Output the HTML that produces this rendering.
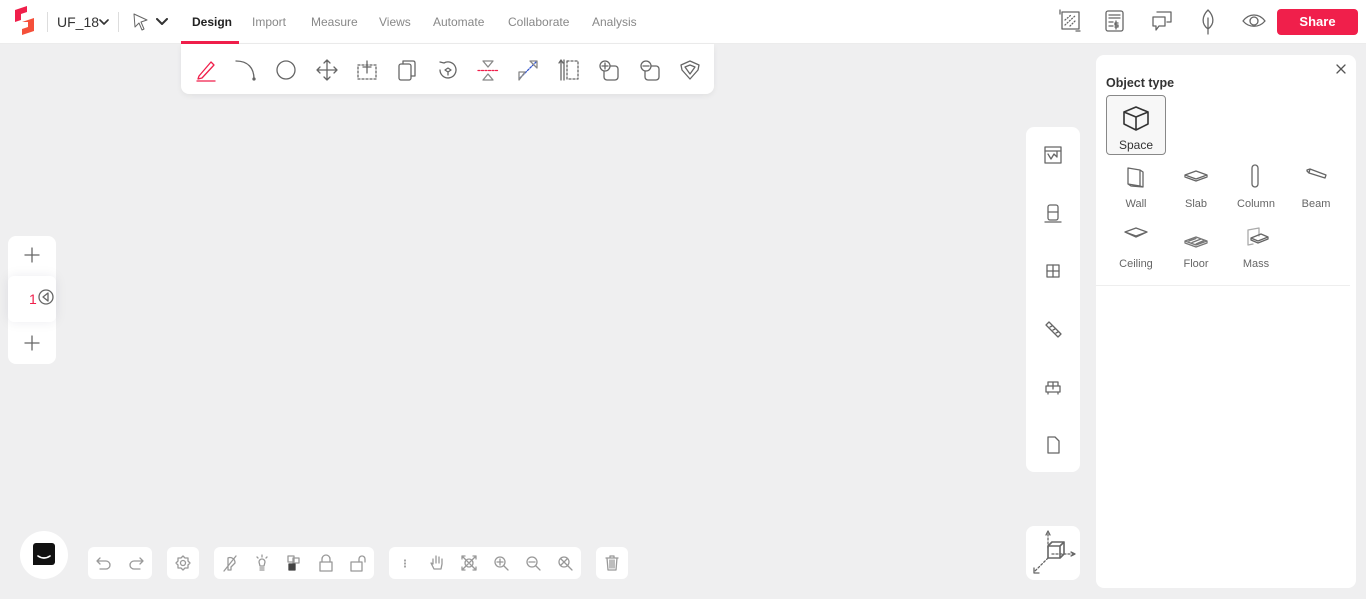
<!DOCTYPE html>
<html><head><meta charset="utf-8"><style>
*{box-sizing:border-box;margin:0;padding:0}
body{width:1366px;height:599px;overflow:hidden;background:#efeff0;font-family:"Liberation Sans",sans-serif;position:relative}
.a{position:absolute}
.top{left:0;top:0;width:1366px;height:44px;background:#fff;border-bottom:1px solid #ececec}
.nav{top:15px;font-size:12px;color:#888}
.card{background:#fff;border-radius:6px}
svg{position:absolute;fill:none;stroke:#666;stroke-width:1.3;stroke-linecap:round;stroke-linejoin:round}
.lbl{font-size:11px;color:#666;text-align:center;width:60px}
</style></head><body>
<div class="a top"></div>
<svg style="left:12px;top:6px" width="26" height="30" viewBox="0 0 26 30"><path d="M3 4 L15 0 L15 6 L9 8 L9 14 L3 16Z" fill="#f01f4b" stroke="none"/><path d="M10 16 L22 12 L22 25 L10 29 L10 23 L16 21 L16 16Z" fill="#f5503a" stroke="none"/></svg>
<div class="a" style="left:47px;top:12px;width:1px;height:20px;background:#ddd"></div>
<div class="a" style="left:57px;top:14px;font-size:14px;color:#333">UF_18</div>
<svg style="left:99px;top:18px" width="10" height="8"><path d="M1 2 L5 6 L9 2" stroke="#333" stroke-width="1.6"/></svg>
<div class="a" style="left:118px;top:12px;width:1px;height:20px;background:#ddd"></div>
<svg style="left:132px;top:12px" width="18" height="20"><path d="M2 2 L15 8 L9 10 L12 17 L10 18 L7 11 L3 15Z" stroke-width="1"/></svg>
<svg style="left:156px;top:18px" width="12" height="8"><path d="M1 1 L6 6 L11 1" stroke="#333" stroke-width="2"/></svg>
<div class="a nav" style="left:192px;color:#222;font-weight:bold">Design</div>
<div class="a" style="left:181px;top:41px;width:58px;height:3px;background:#f01f4b"></div>
<div class="a nav" style="left:252px">Import</div>
<div class="a nav" style="left:311px">Measure</div>
<div class="a nav" style="left:379px">Views</div>
<div class="a nav" style="left:433px">Automate</div>
<div class="a nav" style="left:508px">Collaborate</div>
<div class="a nav" style="left:592px">Analysis</div>
<svg style="left:1059px;top:9px" width="24" height="24"><rect x="3" y="3" width="17" height="17"/><path d="M6 16 L17 6 M6 11 L12 6 M11 17 L17 11" stroke-dasharray="1 2"/><path d="M1 1 V5 M21 22 H17"/></svg>
<svg style="left:1104px;top:9px" width="22" height="24"><rect x="2" y="2" width="17" height="20" rx="2"/><path d="M5 6H16 M5 9H16 M5 13H9 M5 17H9 M12 12 V20 M14 14 H11 V16 H14 V18 H11"/></svg>
<svg style="left:1150px;top:9px" width="24" height="24"><path d="M7 3 H21 V13 H17 M3 8 H15 V17 H9 L6 21 V17 H3Z"/></svg>
<svg style="left:1198px;top:8px" width="20" height="28"><path d="M10 2 C16 8 17 16 10 21 C3 16 4 8 10 2Z M10 10 V26"/></svg>
<svg style="left:1241px;top:13px" width="26" height="16"><path d="M2 8 C8 0 18 0 24 8 C18 15 8 15 2 8Z"/><circle cx="13" cy="8" r="4"/></svg>
<div class="a" style="left:1277px;top:9px;width:81px;height:26px;background:#f01f4b;border-radius:4px;color:#fff;font-weight:bold;font-size:13px;text-align:center;line-height:26px">Share</div>
<div class="a card" style="left:181px;top:44px;width:533px;height:50px;border-radius:0 0 8px 8px;box-shadow:0 2px 6px rgba(0,0,0,.06)"></div>
<svg style="left:195px;top:58px" width="24" height="24"><path d="M4 18 L16 4 L19 7 L7 20 L3 21Z" stroke="#f01f4b"/><path d="M2 23 H20" stroke="#f01f4b"/></svg>
<svg style="left:234px;top:58px" width="24" height="24"><path d="M2 3 C14 3 20 10 20 21"/><circle cx="20" cy="21" r="1" fill="#666"/></svg>
<svg style="left:275px;top:59px" width="22" height="22"><circle cx="11" cy="11" r="9"/></svg>
<svg style="left:315px;top:58px" width="24" height="24"><path d="M12 2V22 M2 12H22 M9 5 L12 2 L15 5 M9 19 L12 22 L15 19 M5 9 L2 12 L5 15 M19 9 L22 12 L19 15"/></svg>
<svg style="left:355px;top:58px" width="24" height="24"><rect x="3" y="7" width="18" height="14" stroke-dasharray="2 2"/><path d="M12 3V15 M8 9H16"/></svg>
<svg style="left:396px;top:58px" width="22" height="24"><rect x="3" y="6" width="12" height="16" rx="2"/><path d="M7 6 V3 H17 Q19 3 19 5 V18 H15"/></svg>
<svg style="left:436px;top:58px" width="24" height="24"><path d="M4 12 A8 8 0 1 0 8 5 M8 5 L4 4"/><path d="M9 12 L12 10 L15 12 L12 14Z M12 14V17"/></svg>
<svg style="left:476px;top:58px" width="24" height="24"><path d="M7 3 H17 L12 9Z M7 22 H17 L12 16Z" stroke="#888"/><path d="M2 12.5 H22" stroke="#f01f4b" stroke-dasharray="2 1.5"/></svg>
<svg style="left:516px;top:58px" width="24" height="24"><path d="M4 20 L20 4" stroke="#3355cc" stroke-dasharray="2 1.5"/><path d="M3 14 L3 22 L9 14Z M14 3 L21 3 L21 10Z" stroke="#888"/></svg>
<svg style="left:557px;top:58px" width="24" height="24"><path d="M4 2V22 M7 2V22 M2 5L4 2L6 5" /><rect x="10" y="3" width="11" height="18" stroke-dasharray="2 2"/></svg>
<svg style="left:597px;top:58px" width="24" height="24"><rect x="7" y="8" width="14" height="14" rx="3"/><circle cx="8" cy="8" r="5" fill="#fff"/><path d="M8 5V11 M5 8H11"/></svg>
<svg style="left:638px;top:58px" width="24" height="24"><rect x="7" y="8" width="14" height="14" rx="3"/><circle cx="8" cy="8" r="5" fill="#fff"/><path d="M5 8H11"/></svg>
<svg style="left:678px;top:58px" width="24" height="24"><path d="M3 7 L12 3 L21 7 L20 12 L12 21 L4 12Z M7 9 L12 7 L17 9 L12 16Z"/></svg>
<div class="a card" style="left:8px;top:236px;width:48px;height:128px;border-radius:8px"></div>
<svg style="left:24px;top:247px" width="16" height="16"><path d="M8 1V15 M1 8H15"/></svg>
<div class="a" style="left:8px;top:276px;width:48px;height:46px;background:#fff;box-shadow:0 0 12px rgba(0,0,60,.08);border-radius:6px"></div>
<div class="a" style="left:29px;top:291px;color:#f01f4b;font-size:14px">1</div>
<svg style="left:38px;top:289px" width="16" height="16"><circle cx="8" cy="8" r="7"/><path d="M10 4 L5 8 L10 12Z"/></svg>
<svg style="left:24px;top:335px" width="16" height="16"><path d="M8 1V15 M1 8H15"/></svg>
<div class="a card" style="left:1026px;top:127px;width:54px;height:345px;border-radius:8px"></div>
<svg style="left:1043px;top:145px" width="20" height="20"><rect x="2" y="2" width="16" height="16"/><path d="M2 6H18 M5 9 L8 14 L11 9 L14 12 V6"/></svg>
<svg style="left:1043px;top:203px" width="20" height="20"><rect x="5" y="2" width="10" height="15" rx="2"/><path d="M5 9H15 M2 19H18"/></svg>
<svg style="left:1043px;top:261px" width="20" height="20"><rect x="4" y="4" width="12" height="12"/><path d="M10 4V16 M4 10H16"/></svg>
<svg style="left:1043px;top:319px" width="20" height="20"><path d="M3 6 L6 3 L18 15 L15 18Z M7 8 L9 7 M10 11 L12 10 M13 14 L15 13"/></svg>
<svg style="left:1043px;top:377px" width="20" height="20"><path d="M3 9 H17 V15 H3Z M5 9 V5 H15 V9 M10 5 V12 M5 15 V17 M15 15 V17"/></svg>
<svg style="left:1043px;top:435px" width="20" height="20"><path d="M5 2 H12 L16 6 V18 H5Z"/></svg>
<div class="a card" style="left:1026px;top:526px;width:54px;height:54px;border-radius:8px"></div>
<svg style="left:1030px;top:528px" width="48" height="50"><path d="M18 18 L30 18 L30 30 L18 30Z M22 14 L34 14 L34 26 L30 30 M18 18 L22 14 M34 14 L30 18" stroke-width="1.6"/><path d="M18 20 V4 M22 26 H44 M18 30 L4 44" stroke-dasharray="2 2"/><path d="M16 7 L18 3 L20 7 M41 24 L45 26 L41 28 M4 40 L4 45 L9 45"/></svg>
<div class="a card" style="left:1096px;top:55px;width:260px;height:533px;border-radius:8px"></div>
<svg style="left:1335px;top:63px" width="12" height="12"><path d="M2 2 L10 10 M10 2 L2 10" stroke="#555"/></svg>
<div class="a" style="left:1106px;top:76px;font-size:12.5px;font-weight:bold;color:#333">Object type</div>
<div class="a" style="left:1106px;top:95px;width:60px;height:60px;border:1px solid #888;border-radius:4px;background:#f7f7f7"></div>
<svg style="left:1121px;top:104px" width="30" height="28"><path d="M15 3 L27 8 L27 20 L15 26 L3 20 L3 8Z M3 8 L15 13 L27 8 M15 13 V26" stroke="#333" stroke-width="1.6"/></svg>
<div class="a" style="left:1106px;top:138px;width:60px;text-align:center;font-size:12px;color:#333">Space</div>
<svg style="left:1124px;top:165px" width="24" height="24"><path d="M4 3 L16 5 L16 21 L4 19Z M16 5 L19 7 L19 22 L16 21 M4 19 L7 21 L19 22"/></svg>
<svg style="left:1183px;top:168px" width="26" height="16"><path d="M2 7 L13 3 L24 7 L13 11Z M2 7 V9 L13 13 L24 9 V7"/></svg>
<svg style="left:1248px;top:163px" width="14" height="26"><rect x="4" y="2" width="6" height="22" rx="3"/></svg>
<svg style="left:1304px;top:166px" width="24" height="16"><path d="M3 4 L6 3 L22 9 L21 12 L5 7 L3 5Z M6 3 L5 7"/></svg>
<div class="a lbl" style="left:1106px;top:198px">Wall</div>
<div class="a lbl" style="left:1166px;top:198px">Slab</div>
<div class="a lbl" style="left:1226px;top:198px">Column</div>
<div class="a lbl" style="left:1286px;top:198px">Beam</div>
<svg style="left:1123px;top:225px" width="26" height="16"><path d="M2 7 L13 3 L24 7 L13 11Z M2 7 L13 12 L24 7"/></svg>
<svg style="left:1183px;top:234px" width="26" height="16"><path d="M2 7 L13 3 L24 7 L13 11Z M2 7 V9 L13 13 L24 9 V7 M6 7 L13 4.5 M9 8.5 L18 5 M13 10 L21 6.5" stroke="#777"/></svg>
<svg style="left:1245px;top:226px" width="26" height="22"><path d="M3 4 L14 2 V10 M3 4 V19 L8 18" stroke="#aaa"/><path d="M6 12 L16 8 L23 11 L13 15Z M6 12 V14 L13 17 L23 13 V11"/></svg>
<div class="a lbl" style="left:1106px;top:258px">Ceiling</div>
<div class="a lbl" style="left:1166px;top:258px">Floor</div>
<div class="a lbl" style="left:1226px;top:258px">Mass</div>
<div class="a" style="left:1096px;top:285px;width:254px;height:1px;background:#eee"></div>
<div class="a" style="left:20px;top:531px;width:48px;height:48px;border-radius:50%;background:#fff"></div>
<div class="a" style="left:33px;top:543px;width:22px;height:22px;background:#111;border-radius:3px 3px 3px 0"></div>
<svg style="left:36px;top:555px" width="16" height="6"><path d="M2 1 Q8 5 14 1" stroke="#fff" stroke-width="1.6"/></svg>
<div class="a card" style="left:88px;top:547px;width:64px;height:32px"></div>
<svg style="left:95px;top:554px" width="18" height="18"><path d="M5 4 L2 7 L5 10 M2 7 H11 A4 4 0 0 1 11 15 H5" stroke="#999"/></svg>
<svg style="left:127px;top:554px" width="18" height="18"><path d="M13 4 L16 7 L13 10 M16 7 H7 A4 4 0 0 0 7 15 H13" stroke="#999"/></svg>
<div class="a card" style="left:167px;top:547px;width:32px;height:32px"></div>
<svg style="left:174px;top:554px" width="18" height="18"><circle cx="9" cy="9" r="2.5" stroke="#999"/><path d="M9 2 L11 4 L14 4 L14 7 L16 9 L14 11 L14 14 L11 14 L9 16 L7 14 L4 14 L4 11 L2 9 L4 7 L4 4 L7 4Z" stroke="#999"/></svg>
<div class="a card" style="left:214px;top:547px;width:160px;height:32px"></div>
<svg style="left:221px;top:554px" width="18" height="18"><path d="M7 4 A5 5 0 0 1 14 9 L10 13 V16 H7 V13 Z M3 17 L15 2" stroke="#999"/></svg>
<svg style="left:253px;top:554px" width="18" height="18"><path d="M6 8 A3 3 0 1 1 12 8 L11 12 H7Z M7 14H11 M7 16H11 M9 1V3 M4 3L5 4 M14 3L13 4" stroke="#999"/></svg>
<svg style="left:285px;top:554px" width="18" height="18"><rect x="3" y="2" width="6" height="6" stroke="#999"/><rect x="8" y="4" width="6" height="5" stroke="#999"/><rect x="4" y="10" width="6" height="6" fill="#444" stroke="#444"/></svg>
<svg style="left:317px;top:554px" width="18" height="18"><rect x="3" y="8" width="12" height="9" stroke="#999"/><path d="M5 8 V5 A4 4 0 0 1 13 5 V8" stroke="#999"/></svg>
<svg style="left:349px;top:554px" width="18" height="18"><rect x="2" y="8" width="11" height="9" stroke="#999"/><path d="M10 8 V5 A3 3 0 0 1 16 5 V8" stroke="#999"/></svg>
<div class="a card" style="left:389px;top:547px;width:192px;height:32px"></div>
<svg style="left:396px;top:554px" width="18" height="18"><path d="M9 6V7 M9 9V10 M9 12V13" stroke="#777"/></svg>
<svg style="left:428px;top:554px" width="18" height="18"><path d="M5 10 V5 M8 9 V2 M11 9 V3 M14 10 V5 M5 10 L3 9 L6 15 H13 L14 10" stroke="#999"/></svg>
<svg style="left:460px;top:554px" width="18" height="18"><circle cx="9" cy="9" r="4" stroke="#999"/><path d="M2 2 L16 16 M16 2 L2 16 M2 5V2H5 M13 2H16V5 M2 13V16H5 M16 13V16H13" stroke="#999"/></svg>
<svg style="left:492px;top:554px" width="18" height="18"><circle cx="8" cy="8" r="5" stroke="#999"/><path d="M12 12 L16 16 M8 5V11 M5 8H11" stroke="#999"/></svg>
<svg style="left:524px;top:554px" width="18" height="18"><circle cx="8" cy="8" r="5" stroke="#999"/><path d="M12 12 L16 16 M5 8H11" stroke="#999"/></svg>
<svg style="left:556px;top:554px" width="18" height="18"><circle cx="8" cy="8" r="5" stroke="#999"/><path d="M12 12 L16 16 M5 5 L11 11 M11 5 L5 11" stroke="#999"/></svg>
<div class="a card" style="left:596px;top:547px;width:32px;height:32px"></div>
<svg style="left:603px;top:554px" width="18" height="18"><path d="M3 4H15 M7 4V2H11V4 M4 4 L5 16 H13 L14 4 M7 6V14 M9 6V14 M11 6V14" stroke="#999"/></svg>
</body></html>
